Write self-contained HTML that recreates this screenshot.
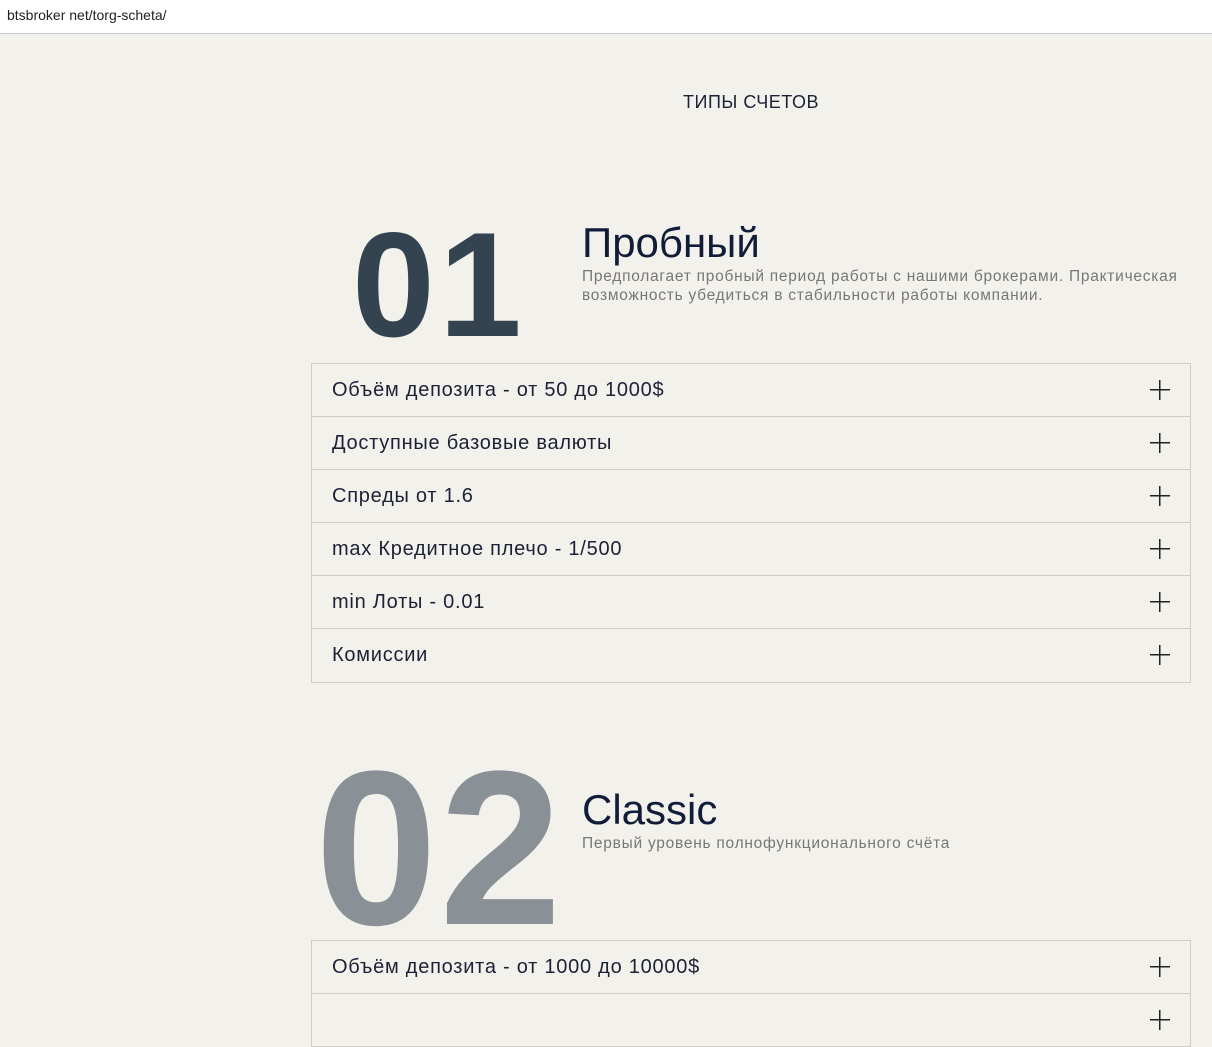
<!DOCTYPE html>
<html><head><meta charset="utf-8"><style>
*{margin:0;padding:0;box-sizing:border-box}
body{width:1212px;height:1001px;overflow:hidden;background:#f3f1ec;font-family:"Liberation Sans","DejaVu Sans",sans-serif;position:relative}
.bar{position:absolute;left:0;top:0;width:1212px;height:34px;background:#fff;border-bottom:1px solid #c8c8d0}
.bar span{position:absolute;left:7px;top:7px;font-size:14px;color:#222}
.abs{position:absolute}
.h{left:0;width:1502px;text-align:center;top:92px;font-size:18px;color:#1a2235;letter-spacing:.5px}
.num{font-family:"Liberation Sans",sans-serif;font-weight:bold;line-height:1;white-space:nowrap}
.t{font-size:42px;color:#111d38;font-family:"Liberation Sans",sans-serif;line-height:1}
.d{font-size:15.5px;color:#777;line-height:19px;width:640px;letter-spacing:.75px}
.acc{left:311px;width:880px;border:1px solid #cfcdc8;border-bottom:none}
.row{height:53px;border-bottom:1px solid #cfcdc8;position:relative;font-size:20px;color:#1c2235;padding-left:20px;line-height:53px;letter-spacing:.75px}
.row:after{content:"";position:absolute;right:20px;top:16px;width:20px;height:20px;background:linear-gradient(#222,#222) center/20px 1.5px no-repeat,linear-gradient(#222,#222) center/1.5px 20px no-repeat}
</style></head><body>
<div class="bar"><span>btsbroker net/torg-scheta/</span></div>
<div class="abs h">ТИПЫ СЧЕТОВ</div>
<div class="abs num" style="left:352px;top:210px;font-size:149px;color:#33434f;letter-spacing:4px">01</div>
<div class="abs t" style="left:582px;top:222px">Пробный</div>
<div class="abs d" style="left:582px;top:267px">Предполагает пробный период работы с нашими брокерами. Практическая возможность убедиться в стабильности работы компании.</div>
<div class="abs acc" style="top:363px">
<div class="row">Объём депозита - от 50 до 1000$</div>
<div class="row">Доступные базовые валюты</div>
<div class="row">Спреды от 1.6</div>
<div class="row">max Кредитное плечо - 1/500</div>
<div class="row">min Лоты - 0.01</div>
<div class="row" style="height:54px">Комиссии</div>
</div>
<div class="abs num" style="left:315px;top:738px;font-size:220px;color:#899096;letter-spacing:2px">02</div>
<div class="abs t" style="left:582px;top:789px">Classic</div>
<div class="abs d" style="left:582px;top:834px">Первый уровень полнофункционального счёта</div>
<div class="abs acc" style="top:940px">
<div class="row">Объём депозита - от 1000 до 10000$</div>
<div class="row">&nbsp;</div>
</div>
</body></html>
